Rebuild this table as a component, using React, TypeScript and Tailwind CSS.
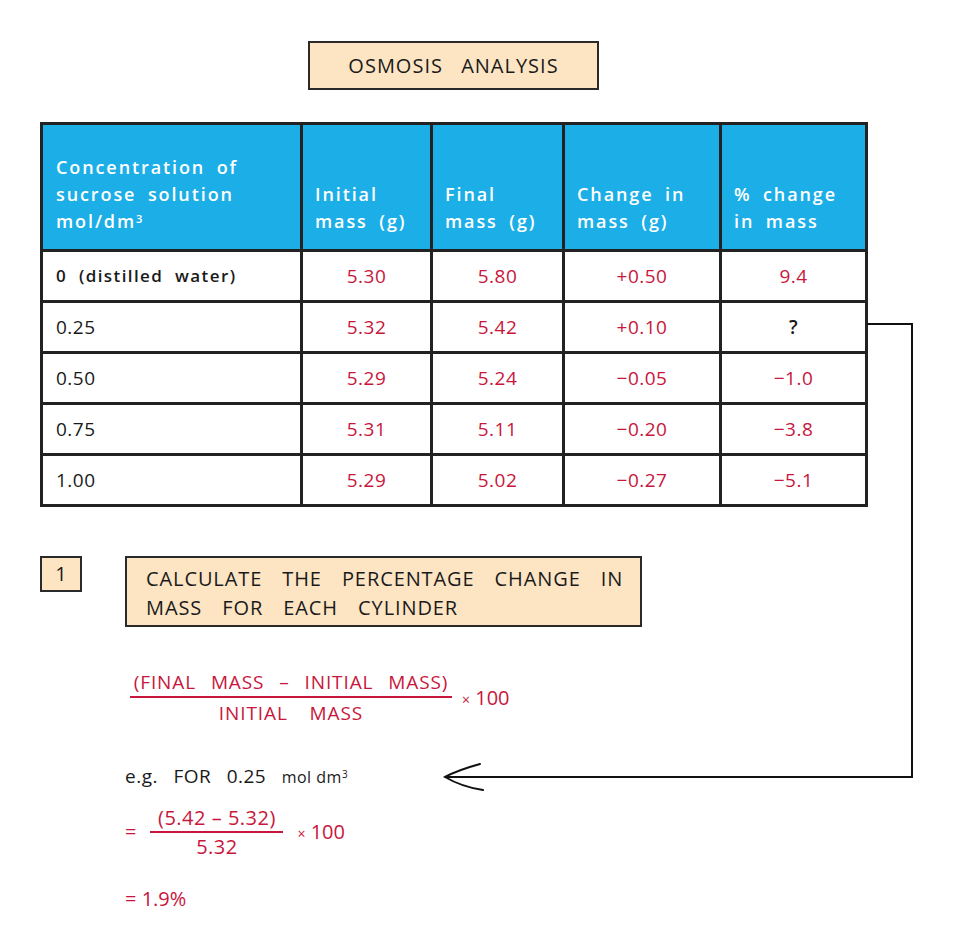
const rows = [
  { c: "0 (distilled water)", i: "5.30", f: "5.80", d: "+0.50", p: "9.4" },
  { c: "0.25", i: "5.32", f: "5.42", d: "+0.10", p: "?" },
  { c: "0.50", i: "5.29", f: "5.24", d: "\u22120.05", p: "\u22121.0" },
  { c: "0.75", i: "5.31", f: "5.11", d: "\u22120.20", p: "\u22123.8" },
  { c: "1.00", i: "5.29", f: "5.02", d: "\u22120.27", p: "\u22125.1" },
];

const red = "text-[#c8163c]";

const App = () => (
  <div className="relative w-[954px] h-[946px] bg-white pl-10 pt-[41px] text-[#1a1a1a] font-['Open_Sans',sans-serif]">
    {/* title */}
    <div className="ml-[268px] w-[291px] h-[49px] bg-[#fde5c4] border-2 border-[#2a2a2a] flex items-center justify-center text-[20px] tracking-[1px] [word-spacing:12px]">
      OSMOSIS ANALYSIS
    </div>

    {/* table */}
    <table className="mt-8 border-collapse border-[3px] border-[#222] text-[19px]">
      <thead>
        <tr className="bg-[#1caee6] text-white h-[127px] align-bottom tracking-[1.9px] [word-spacing:5px] leading-[27px] text-[18px]">
          <th className="w-[260px] border-[3px] border-[#222] text-left pl-[13px] pb-[14px] font-semibold">
            Concentration of<br />sucrose solution<br />mol/dm<sup className="text-[11px]">3</sup>
          </th>
          <th className="w-[130px] border-[3px] border-[#222] text-left pl-[12px] pb-[14px] font-semibold">
            Initial<br />mass (g)
          </th>
          <th className="w-[132px] border-[3px] border-[#222] text-left pl-[12px] pb-[14px] font-semibold">
            Final<br />mass (g)
          </th>
          <th className="w-[157px] border-[3px] border-[#222] text-left pl-[12px] pb-[14px] font-semibold">
            Change in<br />mass (g)
          </th>
          <th className="w-[146px] border-[3px] border-[#222] text-left pl-[12px] pb-[14px] font-semibold">
            % change<br />in mass
          </th>
        </tr>
      </thead>
      <tbody>
        {rows.map((r, k) => (
          <tr key={k} className="h-[51px]">
            <td className={`border-[3px] border-[#222] pl-[13px] ${k === 0 ? "font-semibold text-[17px] tracking-[1.4px] [word-spacing:6px]" : "tracking-[0.5px]"}`}>{r.c}</td>
            <td className={`border-[3px] border-[#222] text-center tracking-[0.5px] ${red}`}>{r.i}</td>
            <td className={`border-[3px] border-[#222] text-center tracking-[0.5px] ${red}`}>{r.f}</td>
            <td className={`border-[3px] border-[#222] text-center tracking-[0.5px] ${red}`}>{r.d}</td>
            <td className={`border-[3px] border-[#222] text-center tracking-[0.5px] ${r.p === "?" ? "text-[#1a1a1a] font-semibold" : red}`}>{r.p}</td>
          </tr>
        ))}
      </tbody>
    </table>

    {/* step 1 */}
    <div className="mt-[49px] flex items-start gap-[43px]">
      <div className="w-[42px] h-[36px] bg-[#fde5c4] border-2 border-[#2a2a2a] flex items-center justify-center text-[20px]">
        1
      </div>
      <div className="w-[517px] h-[71px] bg-[#fde5c4] border-2 border-[#2a2a2a] pl-[19px] pt-[6px] text-[20px] leading-[29px] tracking-[0.9px] [word-spacing:14px]">
        CALCULATE THE PERCENTAGE CHANGE IN
        <br />
        MASS FOR EACH CYLINDER
      </div>
    </div>

    {/* formula */}
    <div className={`ml-[90px] mt-[42px] flex items-center gap-[10px] ${red} text-[19px]`}>
      <div className="flex flex-col items-center w-[322px]">
        <div className="leading-[26px] tracking-[0.9px] [word-spacing:9px]">(FINAL MASS &ndash; INITIAL MASS)</div>
        <div className="w-full h-[2px] bg-[#c8163c] mt-[1px]" />
        <div className="leading-[26px] mt-[2px] tracking-[0.9px] [word-spacing:16px]">INITIAL MASS</div>
      </div>
      <span className="text-[20px]"><span className="text-[14px]">&times;</span> 100</span>
    </div>

    {/* example */}
    <div className="ml-[85px] mt-[36px] text-[19px] tracking-[0.5px] [word-spacing:10px]">
      e.g. FOR 0.25 <span className="text-[16px] [word-spacing:0px]">mol dm<sup className="text-[10px]">3</sup></span>
    </div>

    <div className={`ml-[85px] mt-[14px] flex items-center gap-[14px] ${red} text-[20px]`}>
      <span>=</span>
      <div className="flex flex-col items-center w-[133px]">
        <div className="leading-[26px] tracking-[0.5px]">(5.42 &ndash; 5.32)</div>
        <div className="w-full h-[2px] bg-[#c8163c]" />
        <div className="leading-[26px] mt-[1px] tracking-[0.5px]">5.32</div>
      </div>
      <span><span className="text-[14px]">&times;</span> 100</span>
    </div>

    <div className={`ml-[85px] mt-[24px] ${red} text-[20px]`}>= 1.9%</div>

    {/* connector arrow */}
    <svg className="absolute left-0 top-0 pointer-events-none" width="954" height="946">
      <path d="M867 324 H912 V777 H446" fill="none" stroke="#111" strokeWidth="2" />
      <path d="M480 764 Q458 770 445 777 Q462 787 483 790" fill="none" stroke="#111" strokeWidth="2" strokeLinecap="round" />
    </svg>
  </div>
);

export default App;
